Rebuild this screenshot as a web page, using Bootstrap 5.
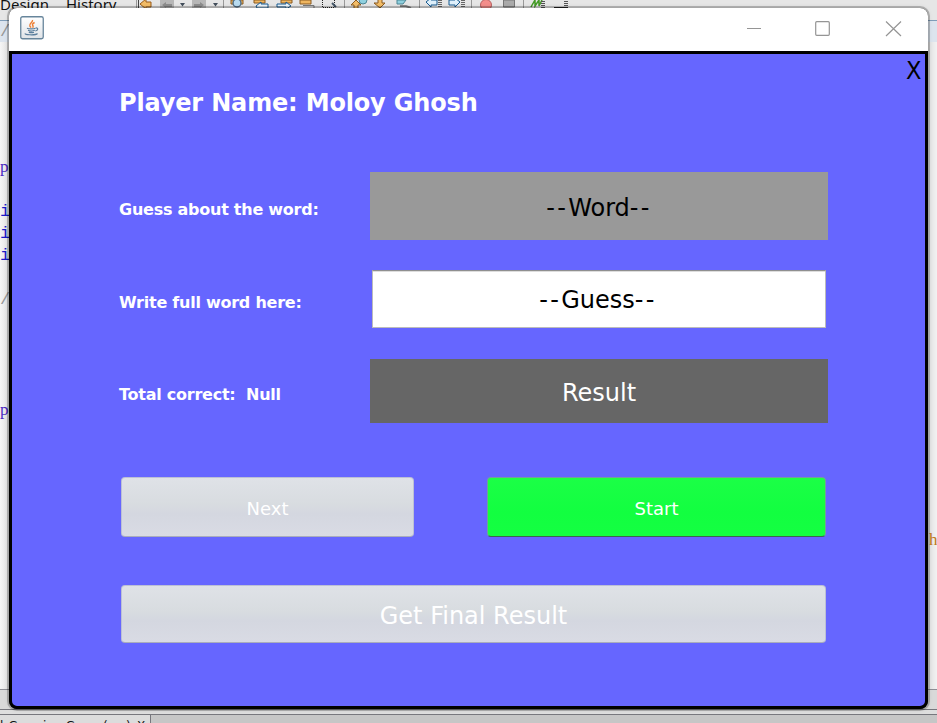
<!DOCTYPE html>
<html lang="en">
<head>
<meta charset="utf-8">
<title>Word Guess</title>
<meta name="viewport" content="width=device-width, initial-scale=1">
<link href="https://cdn.jsdelivr.net/npm/bootstrap@5.3.0/dist/css/bootstrap.min.css" rel="stylesheet">
<style>
body{width:937px;height:723px;font-family:"DejaVu Sans",sans-serif;background:#e9e9e9;line-height:1}
/* editor behind the dialog */
.ide-bar{height:20px;background:#e6e6e6}
.ide-menu{font:15px/20px "Noto Sans",sans-serif;color:#111;height:20px;margin-top:-6px}
.ide-menu span:first-child{width:66px}
.ide-menu span:last-child{width:70px}
.ide-strip{height:22px;background:#dce4ee;border-top:1px solid #7f9db9}
.ide-code{height:647px;background:linear-gradient(90deg,#f6f6f6 0,#e2e2e2 8px,#e2e2e2 929px,#f2f2f2 937px)}
.code-col{font:17px/22px "Liberation Mono",monospace;color:#1919c8;width:12px;white-space:pre}
.code-col .kw{font-family:"Liberation Serif",serif;color:#4a28c0}
.code-col .cm,.ide-strip .cm{color:#969696}
.ide-strip .cm{font:17px/22px "Liberation Mono",monospace}
.ide-status{height:21px;background:#d9d9d9;border-top:1px solid #8e8e94;border-bottom:1px solid #77777d}
.ide-gap{height:4px;background:#dedede}
.ide-tabs{height:9px;background:#c6c6c6;border-top:1px solid #77777d}
.ide-tab{width:151px;background:#dcdcdc;border-right:1px solid #77777d;font:12px/16px "DejaVu Sans",sans-serif;letter-spacing:-.45px;color:#111;white-space:pre;padding-top:3px}
/* dialog window */
.win{left:9px;top:8px;width:919px;height:701px;border-radius:8px;box-shadow:0 0 0 2px rgba(0,0,0,.22),0 0 5px rgba(0,0,0,.15);background:#000}
.win-title{height:43px;padding:0 26px 0 11px}
.win-client{height:658px;background:#6666ff;border:3px solid #000;border-radius:0 0 8px 8px}
.exit-x{height:32px;padding:0 4px 0 0;font-size:24px;line-height:34px;font-family:"DejaVu Sans",sans-serif;color:#000}
.exit-x span{display:inline-block;transform:scaleX(.94);transform-origin:right}
.game{width:708px;margin-left:108px}
.player{font-size:24px;line-height:32px;height:32px;margin:1px 0 53px -1px;letter-spacing:-.17px}
.line{display:grid;grid-template-columns:250px 458px}
.cap{font-size:16px;letter-spacing:-.25px;white-space:pre;padding-top:8px;margin-left:-1px}
.pane{font-size:24px;display:flex;align-items:center;justify-content:center;padding-top:3px}
.dash{letter-spacing:2.3px}
.r1{height:68px;margin-bottom:30px}.r1 .pane{background:#999;color:#000}
.r2{height:59px;margin-bottom:30px}.r2 .cap{padding-top:7px}
.r2 .form-control{width:454px;height:58px;margin:0 2px;padding:0 2px 0 0;line-height:58px;border:1px solid #bbb;border-top-color:#8f8f8f;border-radius:0;font-size:24px;color:#000;box-shadow:inset 0 1px #ddd}
.r3{height:64px;margin-bottom:54px}.r3 .pane{background:#666;color:#fff}
.acts{padding:0 2px 0 1px}
.acts .btn{border:1px solid #bcc0d5;border-bottom-color:#a9adbc;border-radius:4px;color:#fff;padding:3px 0 0;background:linear-gradient(#dfe2e7,#d8dce0 45%,#d4d7e0 62%,#d9dbe4);opacity:1}
.b-next{width:293px;height:60px;font-size:18px}
.acts .b-start{width:339px;height:60px;font-size:18px;background:linear-gradient(#1bff46,#12ff40 60%,#14ff42);border-color:#72a09a;border-bottom-color:#3e6350}
.b-final{height:58px;margin-top:48px;font-size:24px}
</style>
<script src="https://cdn.jsdelivr.net/npm/bootstrap@5.3.0/dist/js/bootstrap.bundle.min.js"></script>
</head>
<body class="position-relative overflow-hidden m-0">
<div class="ide">
  <div class="ide-bar d-flex overflow-hidden">
    <div class="ide-menu d-flex"><span>Design</span><span>History</span></div>
    <svg width="440" height="9" viewBox="136 0 440 9">
      <path d="M136.500 0v9M223.500 0v9M344.500 0v9M419.500 0v9M471.500 0v9M523.500 0v9" stroke="#999"/>
      <path d="M138.500 0v8" stroke="#444"/>
      <path d="M140 4l6-5v3h5v5h-5v2z" fill="#f3bd67" stroke="#9a5b18"/>
      <path d="M160 0h14v8h-14zM192 0h14v8h-14z" fill="#b7b7b7"/><path d="M162 5l4-3v2h6v3h-6v1zM204 5l-4-3v2h-6v3h6v1z" fill="#8d8d8d"/>
      <path d="M180 3h5l-2.500 3.500zM213 3h5l-2.500 3.500z" fill="#444f5c"/>
      <path d="M231 0h12v4h-12z" fill="#efb660" stroke="#8a5a20"/><circle cx="237" cy="3" r="4" fill="#b9dcf0" stroke="#52718a" stroke-width="1.500"/>
      <path d="M254 0h11v3h-11zM281 0h11v3h-11zM300 0h11v4h-11z" fill="#efb660" stroke="#8a5a20"/>
      <path d="M256 6l5-4v2h7v4h-11zM291 6l-5-4v2h-9v3h9v2z" fill="#eaf5fd" stroke="#165a91"/>
      <path d="M303 5.500h11v3" fill="none" stroke="#777"/>
      <path d="M322.500 0v7.500h12V0" fill="none" stroke="#222" stroke-dasharray="1 1"/><path d="M332 3l4 4" stroke="#46586a" stroke-width="2"/>
      <circle cx="363" cy="0" r="4" fill="#8fd0df" stroke="#4d8795"/><path d="M351 5l5-5 5 5h-3v4h-4v-4zM374 3h4V-1h4v4h3l-5 5z" fill="#f3bd67" stroke="#8a5a20"/>
      <path d="M397 0h9l-3 4h-6z" fill="#8fd0df" stroke="#4d8795"/><path d="M400 6h6l5 2" fill="none" stroke="#888" stroke-width="2"/>
      <path d="M426 2l5-4v2h6v5h-6v2zM460 2l-5-4v2h-6v5h6v2z" fill="#dff0fb" stroke="#165a91"/>
      <path d="M440 0v8M463 0v8" stroke="#666" stroke-width="4" stroke-dasharray="1 1"/>
      <circle cx="486" cy="5" r="5.500" fill="#f48e8b" stroke="#b86262"/>
      <path d="M503.500 0h11v7h-11z" fill="#aaa" stroke="#777"/>
      <path d="M531 7l4-7v6l4-6v6l3-6" stroke="#439b25" stroke-width="1.500" fill="none"/><path d="M543 1v7M566 1v7" stroke="#555" stroke-width="4" stroke-dasharray="1 1"/><path d="M554 7.500h14" stroke="#222"/>
    </svg>
  </div>
  <div class="ide-strip"><span class="cm">/</span></div>
  <div class="ide-code d-flex justify-content-between overflow-hidden">
    <div class="code-col" style="padding-top:114px"><span class="kw">p</span>

i
i
i

<span class="cm">/</span>




<span class="kw">p</span></div>
    <div class="code-col" style="padding-top:487px;width:8px"><span style="font-family:'Liberation Serif',serif;color:#c07818">h</span></div>
  </div>
  <div class="ide-status"></div>
  <div class="ide-gap"></div>
  <div class="ide-tabs d-flex overflow-hidden"><div class="ide-tab">l_Guessing_Game (run)  X</div></div>
</div>

<main class="win position-absolute overflow-hidden">
  <header class="win-title bg-white d-flex justify-content-between">
    <svg width="24" height="24" viewBox="0 0 24 24" class="mt-2">
      <defs><linearGradient id="tile" x2="0" y2="1"><stop stop-color="#fff"/><stop offset="1" stop-color="#dfe3e7"/></linearGradient></defs>
      <rect x=".75" y=".75" width="22.500" height="22" rx="1.800" fill="url(#tile)" stroke="#67859b" stroke-width="1.300"/>
      <path d="M12.500 4c1 2-4 3.500-2.700 6 .4.800 1 1.200 1.400 1.600M14.600 6.500c-3.400 1.500-1.800 2.700-1.500 3.600.2.700-.2 1.200-.6 1.500" fill="none" stroke="#ed7d31" stroke-width="1.400"/>
      <path d="M7 12.300c1.500.8 6.800.8 8.500 0M8 14.300c1.700.8 5 .8 6.800 0M8.800 16.200c1.500.6 3.700.6 5.200 0M15.700 12c3-.5 2.500 2.500-.4 3M5.500 17.500c-2.500 1.200 10 2.200 12 0" fill="none" stroke="#5b7f9d" stroke-width="1.200"/>
    </svg>
    <svg width="155" height="43" viewBox="747 8 155 43" fill="none" stroke="#959595" stroke-width="1.200">
      <path d="M747 28.500h14"/><rect x="815.700" y="21.700" width="13.600" height="13.600" rx="1"/><path d="M886 21.500l15 14.500M901 21.500L886 36"/>
    </svg>
  </header>
  <section class="win-client">
    <div class="exit-x text-end"><span>X</span></div>
    <form class="game text-white">
      <h1 class="player fw-bold">Player Name: Moloy Ghosh</h1>
      <div class="line r1 align-items-stretch"><div class="cap fw-bold d-flex align-items-center">Guess about the word:</div><div class="pane"><span class="dash">--</span>Word<span class="dash">--</span></div></div>
      <div class="line r2"><div class="cap fw-bold d-flex align-items-center" id="guess-label">Write full word here:</div><div role="textbox" contenteditable="true" aria-labelledby="guess-label" class="form-control text-center"><span class="dash">--</span>Guess<span class="dash">--</span></div></div>
      <div class="line r3"><div class="cap fw-bold d-flex align-items-center">Total correct:  Null</div><div class="pane">Result</div></div>
      <div class="acts">
        <div class="d-flex justify-content-between"><button type="button" class="btn b-next">Next</button><button type="button" class="btn b-start">Start</button></div>
        <button type="button" class="btn b-final w-100">Get Final Result</button>
      </div>
    </form>
  </section>
</main>
</body>
</html>
